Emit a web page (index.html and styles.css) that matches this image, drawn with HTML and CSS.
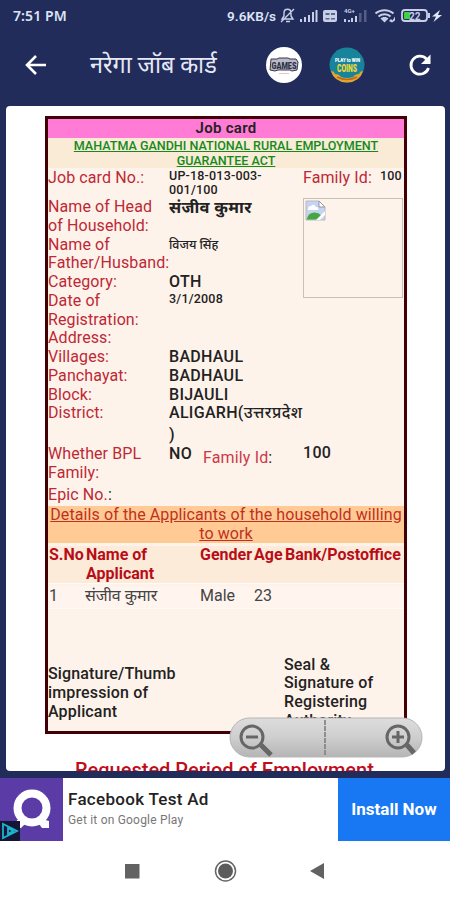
FILE: index.html
```
<!DOCTYPE html>
<html lang="hi">
<head>
    <meta charset="UTF-8">
    <meta name="viewport" content="width=device-width, initial-scale=1.0">
    <title>नरेगा जॉब कार्ड</title>
    <link rel="stylesheet" href="styles.css">
</head>
<body>
    <!-- Status bar -->
    <div class="status">
        <span class="time">7:51 PM</span>
        <span class="speed">9.6KB/s</span>
        <svg class="status-icons" width="166" height="24" viewBox="276 4 166 24">
            <g fill="none" stroke="#c9cfe6" stroke-width="1.4">
                <path d="M282 19h11l-2-3v-3c0-5-7-5-7 0v3zM286 21.500h4M281 22l13-13"/>
                <path d="M375.500 13.500c5-4.500 13-4.500 18 0M378.500 16.500c3.500-3 9-3 12 0" stroke-width="2"/>
                <rect x="402" y="10" width="25" height="11" rx="3" stroke-width="1.800"/>
            </g>
            <g fill="#c9cfe6">
                <path d="M300 19h2v3h-2zM304 17h2v5h-2zM308 15h2v7h-2zM312 12h2v10h-2zM315.500 10h2v12h-2z"/>
                <rect x="323" y="10" width="14" height="12" rx="2"/>
                <path d="M344 19h2v3h-2zM348 20h2v2h-2zM351 18h2v4h-2zM355 16h2v6h-2z"/>
                <path d="M359 13h2.500v9H359zM364 10h2.500v12H364z" opacity=".3"/>
                <path d="M380.500 18.500c2-2 6-2 8 0l-4 4zM428 13h2v5h-2z"/>
                <path d="M440 10l-8 6.500h4L433.500 22l8.500-7h-4z" fill="#e3e7f5"/>
                <path d="M389 21l2-2 1.500 1.500 2.500-4v4l-3 2z"/>
            </g>
            <path d="M325.500 13h4v2h-4zM331 13h4v2h-4zM325.500 18h4v1.500h-4zM331 18h4v1.500h-4z" fill="#5d668d"/>
            <rect x="404" y="12" width="6" height="7" rx="1" fill="#42d33c"/>
            <text x="344" y="13" class="net">4G+</text>
            <text x="409" y="19.500" class="pct">22</text>
        </svg>
    </div>

    <!-- App header -->
    <header class="header">
        <svg class="back" width="22" height="22" viewBox="0 0 22 22"><path d="M21 11H3M11 2L2 11l9 9" fill="none" stroke="#fff" stroke-width="2.600"/></svg>
        <h1>नरेगा जॉब कार्ड</h1>
        <svg class="badge-games" width="38" height="38" viewBox="0 0 38 38">
            <circle cx="19" cy="19" r="18" fill="#fff"/>
            <path d="M6 13h6l2-1h9l2 1h6l2 3-1 8-5 1-2-1H13l-3 1-5-1z" fill="#b9bac6" stroke="#34374c"/>
            <text x="6.500" y="23" textLength="25" lengthAdjust="spacingAndGlyphs" class="games">GAMES</text>
            <path d="M14 27.500h10" stroke="#dcc" stroke-width="1"/>
        </svg>
        <svg class="badge-coins" width="38" height="38" viewBox="0 0 38 38">
            <circle cx="19" cy="19" r="17.500" fill="#17849c"/>
            <path d="M3 25q3 0 4 3 4 0 6 3 6 2 12 0 2-3 6-3 1-3 4-3-3 11-16 11.500Q6 36 3 25z" fill="#e8a42d"/>
            <path d="M9 31q10 5 20 0" fill="none" stroke="#b46a20" stroke-width="1.500"/>
            <text x="7" y="15.500" textLength="25" lengthAdjust="spacingAndGlyphs" class="play">PLAY to WIN</text>
            <text x="9" y="26" textLength="20" lengthAdjust="spacingAndGlyphs" class="coins">COINS</text>
        </svg>
        <svg class="reload" width="24" height="24" viewBox="0 0 24 24">
            <path d="M18.500 6A9 9 0 1 0 20.500 15" fill="none" stroke="#fff" stroke-width="2.800"/>
            <path d="M22.500 1.500v9.500H13z" fill="#fff"/>
        </svg>
    </header>

    <!-- Job card -->
    <main class="page">
        <section class="card">
            <h2 class="card-title">Job card</h2>
            <h3 class="act">MAHATMA GANDHI NATIONAL RURAL EMPLOYMENT<br>GUARANTEE ACT</h3>
            <div class="info">
                <div class="fields">
                    <div class="row r-no"><span class="label">Job card No.:</span><b class="small">UP-18-013-003-<br>001/100</b></div>
                    <div class="row r2"><span class="label">Name of Head<br>of Household:</span><b class="hindi">संजीव कुमार</b></div>
                    <div class="row r2"><span class="label">Name of<br>Father/Husband:</span><b class="hindi-small">विजय सिंह</b></div>
                    <div class="row"><span class="label">Category:</span><b>OTH</b></div>
                    <div class="row r2"><span class="label">Date of<br>Registration:</span><b class="small">3/1/2008</b></div>
                    <div class="row"><span class="label">Address:</span></div>
                    <div class="row"><span class="label">Villages:</span><b>BADHAUL</b></div>
                    <div class="row"><span class="label">Panchayat:</span><b>BADHAUL</b></div>
                    <div class="row"><span class="label">Block:</span><b>BIJAULI</b></div>
                    <div class="row r-dist"><span class="label">District:</span><b>ALIGARH(<span class="state">उत्तरप्रदेश</span><br><span class="paren">)</span></b></div>
                    <div class="row r-bpl"><span class="label">Whether BPL<br>Family:</span><b>NO</b><span class="fam">Family Id<i>:</i></span></div>
                    <div class="row"><span class="label">Epic No.<i>:</i></span></div>
                </div>
                <div class="side">
                    <div class="family"><span class="label">Family Id:</span><b class="small">100</b></div>
                    <div class="photo">
                        <svg width="21" height="21" viewBox="0 0 21 21">
                            <path d="M1 1h13l6 6v13H1z" fill="#c4d4f2" stroke="#b9b9bd"/>
                            <path d="M14 1v6h6z" fill="#fff" stroke="#999"/>
                            <path d="M3 9q0-3 3-3 3-3 5 1 3 0 2 3H3z" fill="#fff"/>
                            <path d="M1.500 19.500q2-7 8-7 4 0 7 3l-4 4z" fill="#45a642"/>
                            <path d="M11 20l9-9v4l-5 5z" fill="#fff"/>
                        </svg>
                    </div>
                    <b class="fam-no">100</b>
                </div>
            </div>
            <h3 class="details">Details of the Applicants of the household willing<br>to work</h3>
            <div class="tr head"><span>S.No</span><span>Name of<br>Applicant</span><span>Gender</span><span>Age</span><span>Bank/Postoffice</span></div>
            <div class="tr"><span>1</span><span class="name">संजीव कुमार</span><span>Male</span><span>23</span><span></span></div>
            <div class="signs">
                <b class="thumb">Signature/Thumb<br>impression of<br>Applicant</b>
                <b class="seal">Seal &amp;<br>Signature of<br>Registering<br>Authority</b>
            </div>
        </section>
        <h2 class="period">Requested Period of Employment</h2>
        <svg class="zoom" width="194" height="42" viewBox="0 0 194 42">
            <defs>
                <linearGradient id="pill" x1="0" y1="0" x2="0" y2="1">
                    <stop offset="0" stop-color="#ddd"/>
                    <stop offset=".5" stop-color="#cecece"/>
                    <stop offset="1" stop-color="#b5b5b5"/>
                </linearGradient>
            </defs>
            <rect x="1" y="1" width="192" height="39" rx="19.500" fill="url(#pill)" stroke="#b5b5b5"/>
            <path d="M96 3v35" stroke="#888" stroke-width="1.800" stroke-dasharray="5 1"/>
            <g fill="none" stroke="#666" stroke-width="3">
                <circle cx="23" cy="20" r="11"/>
                <path d="M17 20h12"/>
                <circle cx="169" cy="20" r="11"/>
                <path d="M163 20h12M169 14v12"/>
                <path d="M32 28l10 10M178 28l7 8" stroke-width="5"/>
            </g>
        </svg>
    </main>

    <!-- Ad banner -->
    <div class="ad">
        <svg class="ad-logo" width="63" height="63" viewBox="0 0 63 63">
            <rect width="63" height="63" fill="#5b3ba5"/>
            <circle cx="32" cy="30" r="14.500" fill="none" stroke="#fff" stroke-width="8"/>
            <path d="M17 42l5-1h20l7 2v7h-7l-3-4H25l-4 4h-5z" fill="#fff"/>
            <rect y="43" width="20" height="20" fill="#151536"/>
            <path d="M3 46v14l14-7zM8 50v6l5-3z" fill="none" stroke="#19b5cf" stroke-width="1.800"/>
        </svg>
        <div class="ad-text">
            <strong>Facebook Test Ad</strong>
            <span>Get it on Google Play</span>
        </div>
        <div class="install">Install Now</div>
    </div>

    <!-- System navigation -->
    <nav class="nav">
        <svg width="450" height="59" viewBox="0 0 450 59">
            <rect x="125" y="23" width="14.500" height="14.500" fill="#626262"/>
            <circle cx="225.500" cy="30" r="10" fill="none" stroke="#666" stroke-width="1.500"/>
            <circle cx="225.500" cy="30" r="7.500" fill="#5c5c5c"/>
            <path d="M324 22v16l-14-8z" fill="#626262"/>
        </svg>
    </nav>
</body>
</html>
```

FILE: styles.css
```
* {
    box-sizing: border-box;
}

body {
    margin: 0;
    width: 450px;
    height: 900px;
    overflow: hidden;
    display: flex;
    flex-direction: column;
    background-color: #212c5b;
    font-family: Roboto, "Noto Sans", sans-serif;
    font-size: 16px;
    line-height: 18.75px;
    color: #222;
}

h1, h2, h3 {
    margin: 0;
    font-size: inherit;
}

i {
    font-style: normal;
    color: #222;
}

svg {
    display: block;
    flex: none;
}

/* Status bar */
.status {
    height: 32px;
    padding: 4px 0 0 13px;
    display: flex;
    color: #dfe4f5;
    line-height: 24px;
    font-weight: 500;
    white-space: nowrap;
}

.time {
    width: 214px;
    font-family: "Noto Sans", sans-serif;
    font-size: 14px;
    font-weight: 600;
    letter-spacing: 0.1px;
}

.speed {
    width: 49px;
    font-size: 13.5px;
    font-weight: 600;
    letter-spacing: 0.1px;
}

.net {
    font-size: 6px;
    font-weight: bold;
    fill: #c9cfe6;
}

.pct {
    font-size: 10px;
    font-weight: bold;
    fill: #c9cfe6;
}

/* Header */
.header {
    height: 74px;
    padding-bottom: 8px;
    display: flex;
    align-items: center;
}

.back {
    margin-left: 25px;
}

.header h1 {
    margin-left: 43px;
    width: 175px;
    color: #e6e9f5;
    font-size: 23.4px;
    font-weight: 400;
    line-height: 36px;
    white-space: nowrap;
}

.badge-coins {
    margin-left: 25px;
}

.reload {
    margin-left: 42px;
}

.games {
    font-size: 9.5px;
    font-weight: 900;
    fill: #2c2f45;
}

.play {
    font-size: 5px;
    font-weight: 900;
    fill: #fff;
}

.coins {
    font-size: 11px;
    font-weight: 900;
    fill: #f1d934;
}

/* Web page area */
.page {
    position: relative;
    height: 665px;
    margin: 0 5px 0 6px;
    padding: 10px 0 0 39px;
    overflow: hidden;
    background-color: #fff;
    border-radius: 4px;
}

.card {
    width: 362px;
    height: 618px;
    border: 3px solid #420006;
    background-color: #fef3ea;
}

.card-title {
    height: 19px;
    background-color: #ff7bd5;
    text-align: center;
    font-size: 15px;
    font-weight: 600;
    line-height: 19px;
    letter-spacing: 0.3px;
}

.act {
    height: 30px;
    background-color: #faebd7;
    color: #148a1d;
    text-align: center;
    text-decoration: underline;
    font-size: 12.55px;
    font-weight: 500;
    line-height: 15px;
    white-space: nowrap;
}

.info {
    display: flex;
    height: 338px;
}

.fields {
    width: 255px;
    padding-top: 0.5px;
}

.row {
    display: flex;
    height: 18.75px;
    white-space: nowrap;
}

.label {
    width: 121px;
    flex: none;
    color: #bd2836;
    letter-spacing: 0.1px;
}

b {
    font-weight: 500;
    letter-spacing: 0.3px;
}

.small {
    font-size: 12.5px;
    line-height: 14.5px;
    letter-spacing: 0.2px;
}

.hindi {
    font-size: 16.5px;
    font-weight: 700;
    line-height: 20px;
}

.hindi-small {
    font-size: 12.5px;
    letter-spacing: 0;
    line-height: 17px;
}

.r-no {
    height: 29.5px;
}

.r2 {
    height: 37.5px;
}

.r-dist {
    height: 41px;
}

.state {
    letter-spacing: 0.45px;
}

.paren {
    position: relative;
    top: 3px;
}

.r-bpl {
    height: 41px;
}

.fam {
    margin: 4px 0 0 11px;
    color: #cb3948;
    letter-spacing: 0.15px;
}

.side {
    width: 101px;
    padding-top: 0.5px;
}

.family {
    display: flex;
    height: 29.5px;
}

.family .label {
    width: 77px;
}

.photo {
    width: 100px;
    height: 100px;
    padding: 1px;
    border: 1px solid #c8c1ba;
}

.fam-no {
    display: block;
    margin-top: 146px;
}

.details {
    height: 37px;
    background-color: #ffca94;
    color: #bf311f;
    text-align: center;
    text-decoration: underline;
    font-weight: 400;
    letter-spacing: 0.1px;
    white-space: nowrap;
}

/* Applicants table */
.tr {
    display: grid;
    grid-template-columns: 35px 112px 52px 29px 1fr;
    gap: 2px;
    margin-top: 3px;
    height: 22px;
    padding-left: 1px;
    white-space: nowrap;
    color: #444;
    background-color: #fff5ee;
    border-bottom: 1px solid #fffaf5;
}

.name {
    margin-left: -1px;
}

.head {
    height: 38px;
    background-color: #fcebd9;
    color: #b80d18;
    font-weight: 700;
}

.signs {
    display: flex;
    justify-content: space-between;
    padding-top: 46.5px;
}

.signs b {
    letter-spacing: 0.15px;
}

.thumb {
    padding-top: 9.5px;
}

.seal {
    width: 120px;
}

.period {
    margin: 25px 0 0 30px;
    color: #c20c18;
    font-size: 20px;
    font-weight: 500;
    line-height: 22px;
    white-space: nowrap;
}

.zoom {
    position: absolute;
    left: 223px;
    top: 611px;
}

/* Ad banner */
.ad {
    margin-top: 7px;
    height: 63px;
    display: flex;
    background-color: #fff;
}

.ad-text {
    width: 275px;
    padding: 10px 0 0 5px;
    display: flex;
    flex-direction: column;
    white-space: nowrap;
}

.ad-text strong {
    font-size: 17px;
    font-weight: 500;
    line-height: 22px;
    letter-spacing: 0.3px;
}

.ad-text span {
    font-size: 12px;
    line-height: 20px;
    letter-spacing: 0.2px;
    color: #777;
}

.install {
    width: 112px;
    background-color: #1877f2;
    color: #fff;
    text-align: center;
    font-size: 17px;
    font-weight: 700;
    line-height: 63px;
}

.nav {
    height: 59px;
    background-color: #fff;
}
```
